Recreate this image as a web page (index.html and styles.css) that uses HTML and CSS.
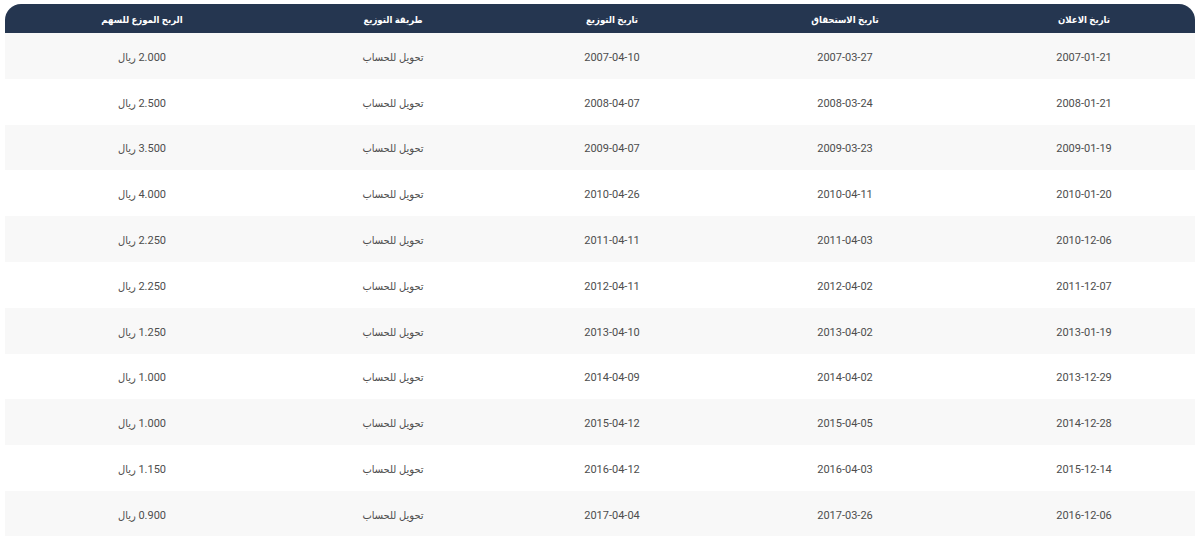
FILE: index.html
```html
<!DOCTYPE html>
<html lang="ar" dir="rtl">
<head>
<meta charset="utf-8">
<link rel="stylesheet" href="styles.css">
</head>
<body>
<div class="wrap">
<table class="div-table">
<colgroup>
<col class="c1"><col class="c2"><col class="c3"><col class="c4"><col class="c5">
</colgroup>
<thead>
<tr><th>تاريخ الاعلان</th><th>تاريخ الاستحقاق</th><th>تاريخ التوزيع</th><th>طريقة التوزيع</th><th>الربح الموزع للسهم</th></tr>
</thead>
<tbody>
<tr><td>2007-01-21</td><td>2007-03-27</td><td>2007-04-10</td><td>تحويل للحساب</td><td>2.000 ريال</td></tr>
<tr><td>2008-01-21</td><td>2008-03-24</td><td>2008-04-07</td><td>تحويل للحساب</td><td>2.500 ريال</td></tr>
<tr><td>2009-01-19</td><td>2009-03-23</td><td>2009-04-07</td><td>تحويل للحساب</td><td>3.500 ريال</td></tr>
<tr><td>2010-01-20</td><td>2010-04-11</td><td>2010-04-26</td><td>تحويل للحساب</td><td>4.000 ريال</td></tr>
<tr><td>2010-12-06</td><td>2011-04-03</td><td>2011-04-11</td><td>تحويل للحساب</td><td>2.250 ريال</td></tr>
<tr><td>2011-12-07</td><td>2012-04-02</td><td>2012-04-11</td><td>تحويل للحساب</td><td>2.250 ريال</td></tr>
<tr><td>2013-01-19</td><td>2013-04-02</td><td>2013-04-10</td><td>تحويل للحساب</td><td>1.250 ريال</td></tr>
<tr><td>2013-12-29</td><td>2014-04-02</td><td>2014-04-09</td><td>تحويل للحساب</td><td>1.000 ريال</td></tr>
<tr><td>2014-12-28</td><td>2015-04-05</td><td>2015-04-12</td><td>تحويل للحساب</td><td>1.000 ريال</td></tr>
<tr><td>2015-12-14</td><td>2016-04-03</td><td>2016-04-12</td><td>تحويل للحساب</td><td>1.150 ريال</td></tr>
<tr><td>2016-12-06</td><td>2017-03-26</td><td>2017-04-04</td><td>تحويل للحساب</td><td>0.900 ريال</td></tr>
</tbody>
</table>
</div>
</body>
</html>
```
FILE: styles.css
```css
html, body {
  margin: 0;
  padding: 0;
  background: #ffffff;
}
body {
  font-family: "Roboto", "DejaVu Sans Condensed", "DejaVu Sans", sans-serif;
}
.wrap {
  padding: 4px 5px 0 5px;
}
.div-table {
  width: 1190px;
  border-collapse: separate;
  border-spacing: 0;
  table-layout: fixed;
}
.c1 { width: 222px; }
.c2 { width: 256px; }
.c3 { width: 210px; }
.c4 { width: 228px; }
.c5 { width: 274px; }
.div-table th {
  background: #253650;
  color: #ffffff;
  font-size: 9.5px;
  font-weight: bold;
  height: 29px;
  padding: 2px 0 0 0;
  box-sizing: border-box;
  text-align: center;
  vertical-align: middle;
}
.div-table th:first-child { border-top-right-radius: 16px; }
.div-table th:last-child { border-top-left-radius: 16px; }
.div-table td {
  height: 45.8px;
  padding: 3px 0 0 0;
  box-sizing: border-box;
  font-size: 11px;
  color: #4d4d4d;
  text-align: center;
  vertical-align: middle;
}
.div-table tbody tr:nth-child(odd) td { background: #f8f8f8; }
.div-table tbody tr:nth-child(even) td { background: #ffffff; }
```
